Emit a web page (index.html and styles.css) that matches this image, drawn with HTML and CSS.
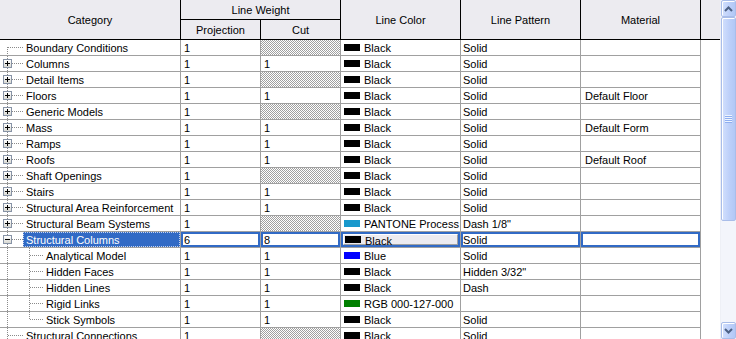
FILE: index.html
```html
<!DOCTYPE html>
<html lang="en">

<head>
    <meta charset="UTF-8">
    <title>Object Styles</title>
    <link rel="stylesheet" href="styles.css">
</head>

<body>
    <div class="window">
        <div class="grid">
            <div class="head">
                <div class="h h-cat">Category</div>
                <div class="h h-lw">Line Weight</div>
                <div class="h h-color">Line Color</div>
                <div class="h h-pat">Line Pattern</div>
                <div class="h h-mat">Material</div>
                <div class="h h-pad"></div>
                <div class="h h-proj">Projection</div>
                <div class="h h-cut">Cut</div>
            </div>

            <div class="row">
                <div class="c cat first"><span class="tw"></span><span class="lbl">Boundary Conditions</span></div>
                <div class="c num">1</div>
                <div class="c hatch"></div>
                <div class="c clr"><span class="sw"></span>Black</div>
                <div class="c pat">Solid</div>
                <div class="c mat"></div>
                <div class="c pad"></div>
            </div>
            <div class="row">
                <div class="c cat"><span class="tw"><i class="exp"></i></span><span class="lbl">Columns</span></div>
                <div class="c num">1</div>
                <div class="c num">1</div>
                <div class="c clr"><span class="sw"></span>Black</div>
                <div class="c pat">Solid</div>
                <div class="c mat"></div>
                <div class="c pad"></div>
            </div>
            <div class="row">
                <div class="c cat"><span class="tw"><i class="exp"></i></span><span class="lbl">Detail Items</span></div>
                <div class="c num">1</div>
                <div class="c hatch"></div>
                <div class="c clr"><span class="sw"></span>Black</div>
                <div class="c pat">Solid</div>
                <div class="c mat"></div>
                <div class="c pad"></div>
            </div>
            <div class="row">
                <div class="c cat"><span class="tw"><i class="exp"></i></span><span class="lbl">Floors</span></div>
                <div class="c num">1</div>
                <div class="c num">1</div>
                <div class="c clr"><span class="sw"></span>Black</div>
                <div class="c pat">Solid</div>
                <div class="c mat">Default Floor</div>
                <div class="c pad"></div>
            </div>
            <div class="row">
                <div class="c cat"><span class="tw"><i class="exp"></i></span><span class="lbl">Generic Models</span></div>
                <div class="c num">1</div>
                <div class="c hatch"></div>
                <div class="c clr"><span class="sw"></span>Black</div>
                <div class="c pat">Solid</div>
                <div class="c mat"></div>
                <div class="c pad"></div>
            </div>
            <div class="row">
                <div class="c cat"><span class="tw"><i class="exp"></i></span><span class="lbl">Mass</span></div>
                <div class="c num">1</div>
                <div class="c num">1</div>
                <div class="c clr"><span class="sw"></span>Black</div>
                <div class="c pat">Solid</div>
                <div class="c mat">Default Form</div>
                <div class="c pad"></div>
            </div>
            <div class="row">
                <div class="c cat"><span class="tw"><i class="exp"></i></span><span class="lbl">Ramps</span></div>
                <div class="c num">1</div>
                <div class="c num">1</div>
                <div class="c clr"><span class="sw"></span>Black</div>
                <div class="c pat">Solid</div>
                <div class="c mat"></div>
                <div class="c pad"></div>
            </div>
            <div class="row">
                <div class="c cat"><span class="tw"><i class="exp"></i></span><span class="lbl">Roofs</span></div>
                <div class="c num">1</div>
                <div class="c num">1</div>
                <div class="c clr"><span class="sw"></span>Black</div>
                <div class="c pat">Solid</div>
                <div class="c mat">Default Roof</div>
                <div class="c pad"></div>
            </div>
            <div class="row">
                <div class="c cat"><span class="tw"><i class="exp"></i></span><span class="lbl">Shaft Openings</span></div>
                <div class="c num">1</div>
                <div class="c hatch"></div>
                <div class="c clr"><span class="sw"></span>Black</div>
                <div class="c pat">Solid</div>
                <div class="c mat"></div>
                <div class="c pad"></div>
            </div>
            <div class="row">
                <div class="c cat"><span class="tw"><i class="exp"></i></span><span class="lbl">Stairs</span></div>
                <div class="c num">1</div>
                <div class="c num">1</div>
                <div class="c clr"><span class="sw"></span>Black</div>
                <div class="c pat">Solid</div>
                <div class="c mat"></div>
                <div class="c pad"></div>
            </div>
            <div class="row">
                <div class="c cat"><span class="tw"><i class="exp"></i></span><span class="lbl">Structural Area Reinforcement</span></div>
                <div class="c num">1</div>
                <div class="c num">1</div>
                <div class="c clr"><span class="sw"></span>Black</div>
                <div class="c pat">Solid</div>
                <div class="c mat"></div>
                <div class="c pad"></div>
            </div>
            <div class="row">
                <div class="c cat"><span class="tw"><i class="exp"></i></span><span class="lbl">Structural Beam Systems</span></div>
                <div class="c num">1</div>
                <div class="c hatch"></div>
                <div class="c clr"><span class="sw sw-pantone"></span>PANTONE Process</div>
                <div class="c pat">Dash 1/8"</div>
                <div class="c mat"></div>
                <div class="c pad"></div>
            </div>
            <div class="row sel">
                <div class="c cat"><span class="tw"><i class="exp open"></i></span><span class="lbl">Structural Columns</span></div>
                <div class="c num">6</div>
                <div class="c num">8</div>
                <div class="c clr"><span class="btn"><span class="sw"></span>Black</span></div>
                <div class="c pat">Solid</div>
                <div class="c mat"></div>
                <div class="c pad"></div>
            </div>
            <div class="row">
                <div class="c cat child"><span class="tw"></span><span class="lbl">Analytical Model</span></div>
                <div class="c num">1</div>
                <div class="c num">1</div>
                <div class="c clr"><span class="sw sw-blue"></span>Blue</div>
                <div class="c pat">Solid</div>
                <div class="c mat"></div>
                <div class="c pad"></div>
            </div>
            <div class="row">
                <div class="c cat child"><span class="tw"></span><span class="lbl">Hidden Faces</span></div>
                <div class="c num">1</div>
                <div class="c num">1</div>
                <div class="c clr"><span class="sw"></span>Black</div>
                <div class="c pat">Hidden 3/32"</div>
                <div class="c mat"></div>
                <div class="c pad"></div>
            </div>
            <div class="row">
                <div class="c cat child"><span class="tw"></span><span class="lbl">Hidden Lines</span></div>
                <div class="c num">1</div>
                <div class="c num">1</div>
                <div class="c clr"><span class="sw"></span>Black</div>
                <div class="c pat">Dash</div>
                <div class="c mat"></div>
                <div class="c pad"></div>
            </div>
            <div class="row">
                <div class="c cat child"><span class="tw"></span><span class="lbl">Rigid Links</span></div>
                <div class="c num">1</div>
                <div class="c num">1</div>
                <div class="c clr"><span class="sw sw-green"></span>RGB 000-127-000</div>
                <div class="c pat"></div>
                <div class="c mat"></div>
                <div class="c pad"></div>
            </div>
            <div class="row">
                <div class="c cat child last"><span class="tw"></span><span class="lbl">Stick Symbols</span></div>
                <div class="c num">1</div>
                <div class="c num">1</div>
                <div class="c clr"><span class="sw"></span>Black</div>
                <div class="c pat">Solid</div>
                <div class="c mat"></div>
                <div class="c pad"></div>
            </div>
            <div class="row">
                <div class="c cat"><span class="tw"></span><span class="lbl">Structural Connections</span></div>
                <div class="c num">1</div>
                <div class="c hatch"></div>
                <div class="c clr"><span class="sw"></span>Black</div>
                <div class="c pat">Solid</div>
                <div class="c mat"></div>
                <div class="c pad"></div>
            </div>
        </div>

        <div class="vscroll">
            <div class="sbtn">
                <svg width="9" height="6" viewBox="0 0 9 6"><path d="M1 5 L4.5 1.5 L8 5" fill="none" stroke="#4d6185" stroke-width="2"/></svg>
            </div>
            <div class="thumb"><span class="grip"></span></div>
            <div class="track"></div>
            <div class="sbtn">
                <svg width="9" height="6" viewBox="0 0 9 6"><path d="M1 1 L4.5 4.5 L8 1" fill="none" stroke="#4d6185" stroke-width="2"/></svg>
            </div>
        </div>
    </div>
</body>

</html>
```

FILE: styles.css
```css
body {
    margin: 0;
    background: #fff;
    font-family: "Liberation Sans", Arial, sans-serif;
    font-size: 11px;
    color: #000;
    overflow: hidden;
}

.window {
    display: flex;
    width: 736px;
    height: 339px;
    overflow: hidden;
}

.grid {
    width: 720px;
    flex: none;
}

/* header */
.head {
    display: grid;
    grid-template-columns: 181px 80px 80px 120px 120px 120px 19px;
    grid-template-rows: 20px 20px;
    background-color: #ecebf0;
}

.h {
    display: flex;
    align-items: center;
    justify-content: center;
    box-sizing: border-box;
    border-right: 1px solid #000;
    border-bottom: 1px solid #000;
}

.h-cat { grid-column: 1; grid-row: 1 / 3; }
.h-lw { grid-column: 2 / 4; grid-row: 1; }
.h-color { grid-column: 4; grid-row: 1 / 3; }
.h-pat { grid-column: 5; grid-row: 1 / 3; }
.h-mat { grid-column: 6; grid-row: 1 / 3; }
.h-pad { grid-column: 7; grid-row: 1 / 3; border-right: none; }
.h-proj { grid-column: 2; grid-row: 2; }
.h-cut { grid-column: 3; grid-row: 2; }

/* rows */
.row {
    display: grid;
    grid-template-columns: 181px 80px 80px 120px 120px 120px 19px;
    height: 16px;
}

.c {
    display: flex;
    align-items: center;
    box-sizing: border-box;
    border-right: 1px solid #a0a0a0;
    border-bottom: 1px solid #a0a0a0;
    white-space: nowrap;
    overflow: hidden;
}

.num { padding-left: 3px; }
.pat { padding-left: 2px; }
.mat { padding-left: 4px; }
.clr { padding-left: 3px; }

.pad {
    border: none;
}

.hatch {
    background: repeating-conic-gradient(#a0a0a0 0 25%, #fff 0 50%) 0 0 / 2px 2px;
}

.sw {
    flex: none;
    width: 16px;
    height: 7px;
    margin-right: 4px;
    background-color: #000;
}

.sw-pantone { background-color: #1898cc; }
.sw-blue { background-color: #0000ff; }
.sw-green { background-color: #008000; }

/* tree lines */
.cat {
    --dotv: repeating-linear-gradient(to bottom, #8a8a8a 0 1px, transparent 1px 2px);
    --doth: repeating-linear-gradient(to right, #8a8a8a 0 1px, transparent 1px 2px);
    background:
        var(--doth) 8px 7px / 16px 1px no-repeat,
        var(--dotv) 7px 0 / 1px 100% no-repeat;
}

.cat.first {
    background:
        var(--doth) 8px 7px / 16px 1px no-repeat,
        var(--dotv) 7px 7px / 1px 100% no-repeat;
}

.cat.child {
    background:
        var(--doth) 30px 7px / 14px 1px no-repeat,
        var(--dotv) 29px 0 / 1px 100% no-repeat,
        var(--dotv) 7px 0 / 1px 100% no-repeat;
}

.cat.child.last {
    background:
        var(--doth) 30px 7px / 14px 1px no-repeat,
        var(--dotv) 29px 0 / 1px 8px no-repeat,
        var(--dotv) 7px 0 / 1px 100% no-repeat;
}

.tw {
    flex: none;
    width: 20px;
    padding-left: 3px;
    display: flex;
    align-items: center;
}

.child .tw {
    width: 40px;
}

.exp {
    width: 9px;
    height: 9px;
    box-sizing: border-box;
    border: 1px solid #8793a6;
    background:
        linear-gradient(#000, #000) center / 5px 1px no-repeat,
        linear-gradient(#000, #000) center / 1px 5px no-repeat,
        linear-gradient(#fff, #d9d9d2);
}

.exp.open {
    background:
        linear-gradient(#000, #000) center / 5px 1px no-repeat,
        linear-gradient(#fff, #d9d9d2);
}

.lbl {
    padding: 0 3px;
}

/* selected row */
.sel .cat .lbl {
    flex: 1;
    align-self: stretch;
    display: flex;
    align-items: center;
    background-color: #316ac5;
    color: #fff;
    padding-left: 2px;
    border: 1px dotted #c6d4ee;
}

.sel .num,
.sel .clr,
.sel .pat,
.sel .mat {
    box-shadow: inset 0 0 0 2px #316ac5;
}

.sel .num { padding-left: 3px; }

.sel .clr {
    padding: 2px;
    align-items: stretch;
}

.btn {
    flex: 1;
    display: flex;
    align-items: center;
    padding: 2px 0 0 1px;
    background-color: #ecebf0;
    border: 1px solid;
    border-color: #fff #a0a0a0 #a0a0a0 #fff;
}

.btn .sw {
    margin-top: -3px;
}

/* scrollbar */
.vscroll {
    width: 16px;
    flex: none;
    display: flex;
    flex-direction: column;
    background-color: #f3f5fb;
    border-left: 1px solid #eef0f6;
    box-sizing: border-box;
}

.sbtn,
.thumb {
    box-sizing: border-box;
    border: 1px solid #a9bde9;
    border-radius: 2px;
    background: linear-gradient(to right, #d3e0fd, #bccff9 60%, #b2c8f6);
    box-shadow: inset 1px 1px 0 #fff;
    display: flex;
    align-items: center;
    justify-content: center;
}

.sbtn {
    height: 17px;
    flex: none;
}

.thumb {
    height: 204px;
    flex: none;
}

.grip {
    width: 7px;
    height: 8px;
    background: repeating-linear-gradient(to bottom, #eef4fe 0 1px, #8eaef0 1px 2px);
}

.track {
    flex: 1;
}
```
